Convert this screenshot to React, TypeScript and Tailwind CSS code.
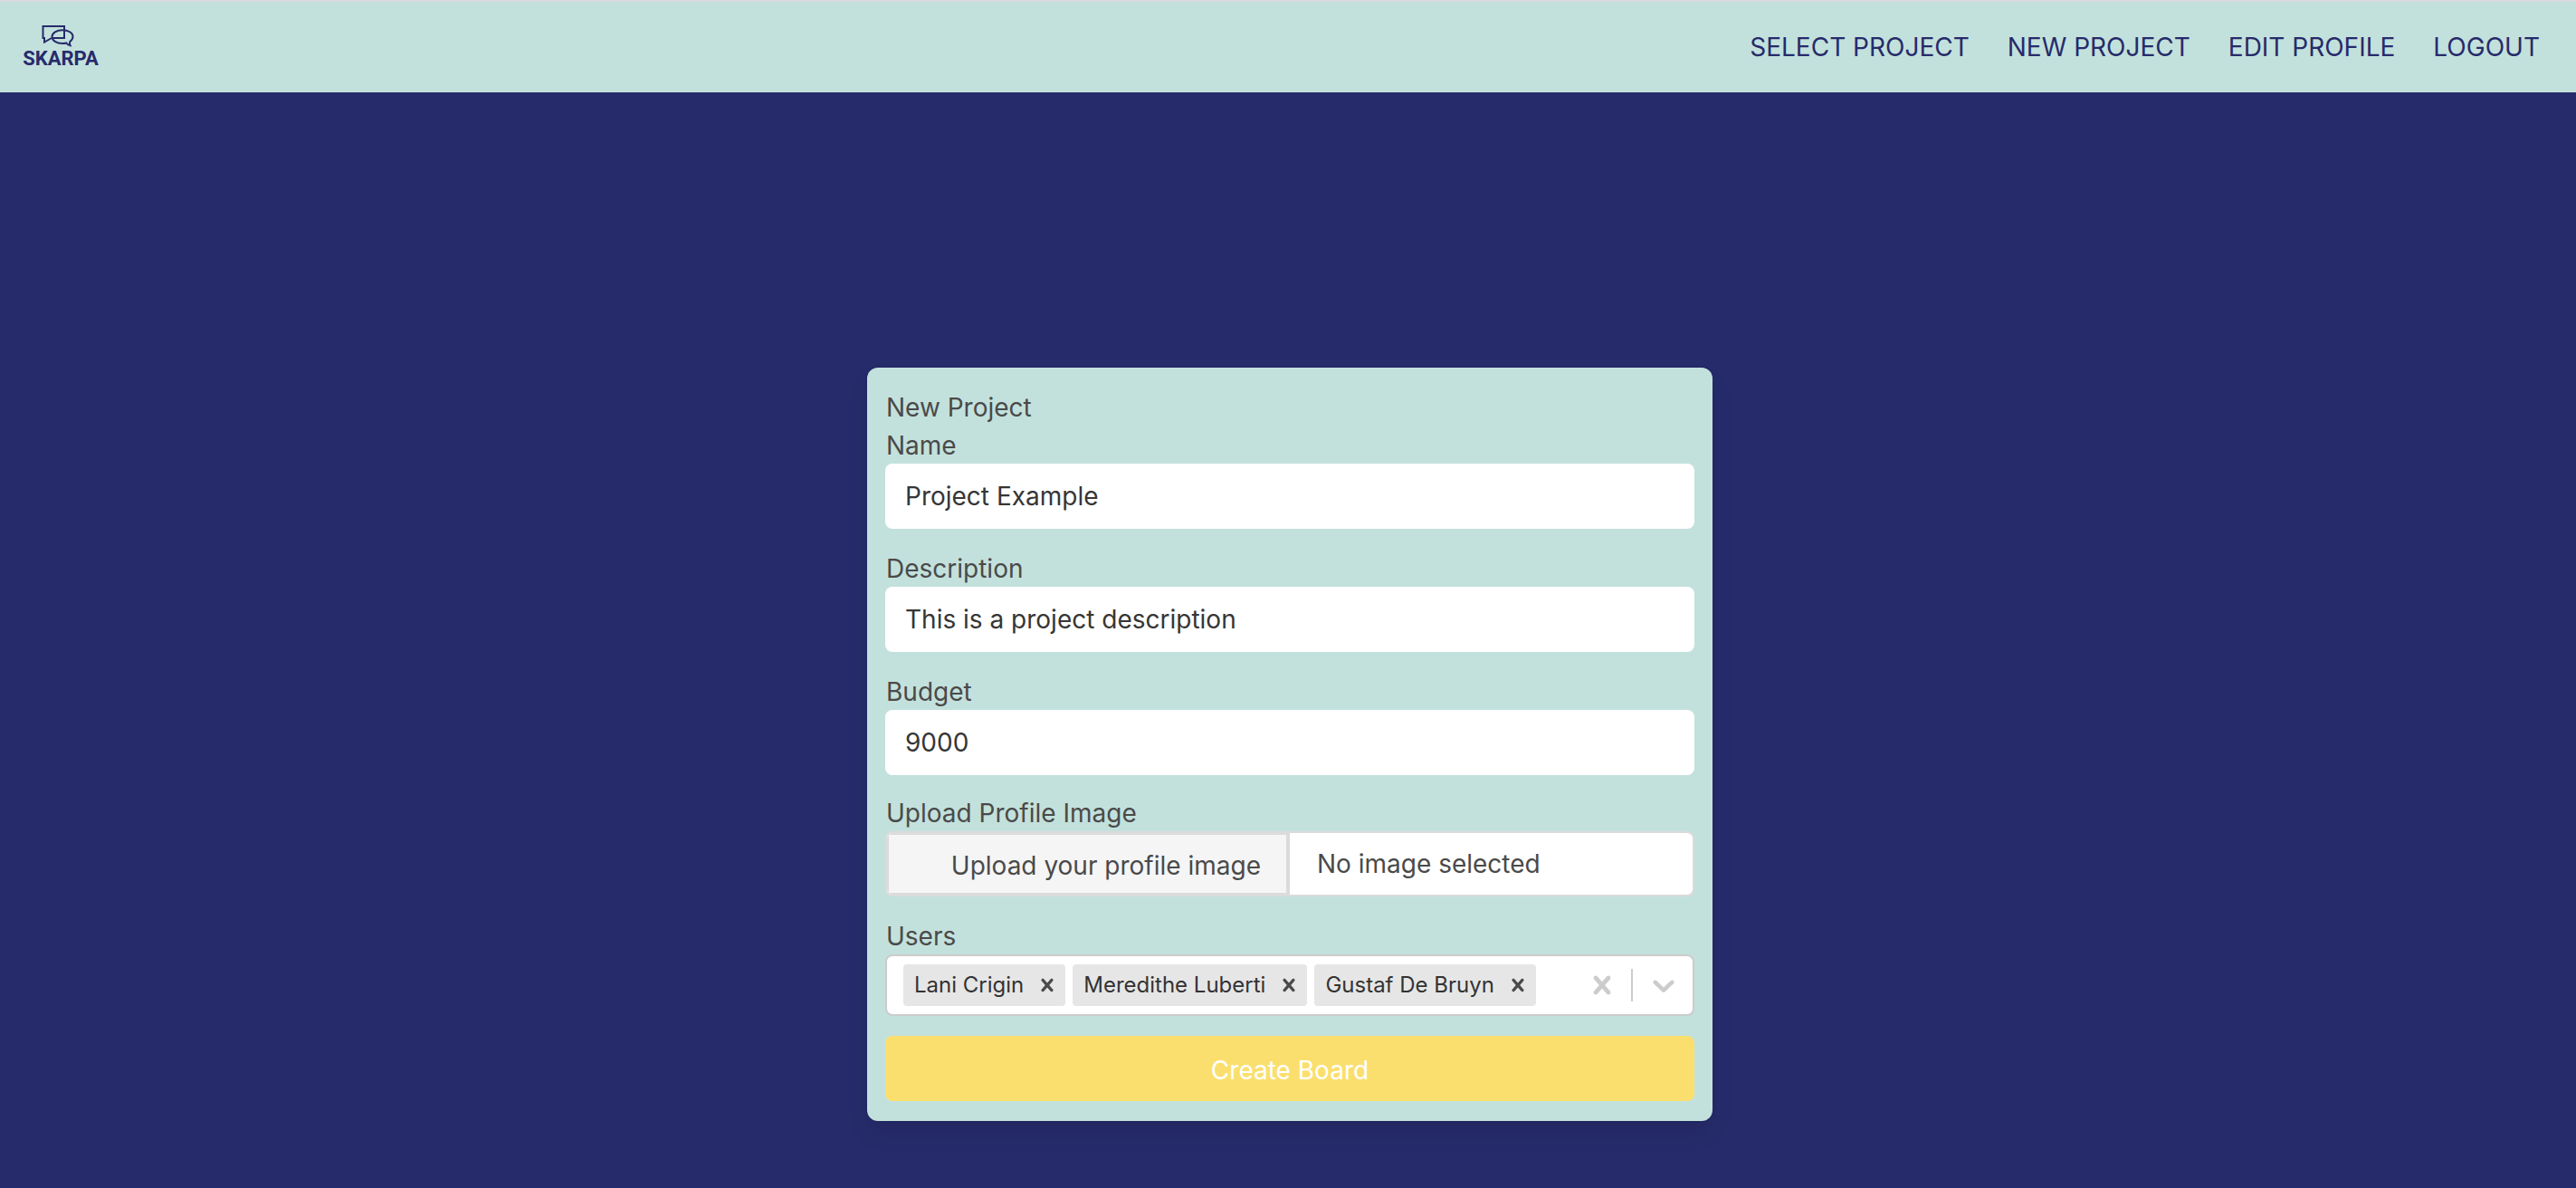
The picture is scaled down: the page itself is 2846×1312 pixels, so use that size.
import React, { useState } from "react";

const CROSS =
  "M14.348 14.849c-0.469 0.469-1.229 0.469-1.697 0l-2.651-3.030-2.651 3.029c-0.469 0.469-1.229 0.469-1.697 0-0.469-0.469-0.469-1.229 0-1.697l2.758-3.15-2.759-3.152c-0.469-0.469-0.469-1.228 0-1.697s1.228-0.469 1.697 0l2.652 3.031 2.651-3.031c0.469-0.469 1.228-0.469 1.697 0s0.469 1.229 0 1.697l-2.758 3.152 2.758 3.15c0.469 0.469 0.469 1.229 0 1.698z";
const CHEVRON =
  "M4.516 7.548c0.436-0.446 1.043-0.481 1.576 0l3.908 3.747 3.908-3.747c0.533-0.481 1.141-0.446 1.574 0 0.436 0.445 0.408 1.197 0 1.615-0.406 0.418-4.695 4.502-4.695 4.502-0.217 0.223-0.502 0.335-0.787 0.335s-0.57-0.112-0.789-0.335c0 0-4.287-4.084-4.695-4.502s-0.436-1.17 0-1.615z";

function Icon({ path, className }: { path: string; className: string }) {
  return (
    <svg viewBox="0 0 20 20" fill="currentColor" aria-hidden="true" className={className}>
      <path d={path} />
    </svg>
  );
}

function Logo() {
  return (
    <a href="#" aria-label="Skarpa" className="flex w-[94px] flex-col items-center text-[#262b6b]">
      <svg viewBox="0 -1 42 26" fill="none" stroke="currentColor" strokeWidth="2" aria-hidden="true" className="h-[26px] w-[42px]">
        <path d="M11 14H25V1H1.500V14H3V18.500L11 14" />
        <path d="M31.200 18C33.500 16.400 34.500 14.500 34.500 12.300C34.500 8.200 29.500 5.300 23 5.300C16.500 5.300 11.500 8.200 11.500 12.500C11.500 17 16.500 20 23 20C25 20 26.200 19.800 27.300 19.500C28.300 21 29.600 22 31.600 22.300C31 21.200 30.800 19.500 31.200 18Z" />
      </svg>
      <span className="font-[Roboto,sans-serif] text-[22px] leading-6 font-bold">SKARPA</span>
    </a>
  );
}

const LINKS = ["SELECT PROJECT", "NEW PROJECT", "EDIT PROFILE", "LOGOUT"];

function Field({ id, label, initial }: { id: string; label: string; initial: string }) {
  return (
    <div className="flex flex-col">
      <label htmlFor={id} className="pt-0.5 pl-px leading-10">
        {label}
      </label>
      <input
        id={id}
        type="text"
        defaultValue={initial}
        className="h-[72px] w-full rounded-lg bg-white px-[22px] text-[#363636] outline-none"
      />
    </div>
  );
}

export default function App() {
  const [users, setUsers] = useState(["Lani Crigin", "Meredithe Luberti", "Gustaf De Bruyn"]);

  return (
    <div className="flex min-h-screen flex-col bg-[#262b6b] font-[Inter,sans-serif] text-[28px] leading-[42px] text-[#4a4a4a]">
      <header className="flex h-[102px] items-center justify-between border-t-2 border-[#d9dbdf] bg-[#c3e1dc] pr-10 pl-5">
        <Logo />
        <nav className="flex gap-[42px] text-[#262b6b]">
          {LINKS.map((link) => (
            <a key={link} href="#">
              {link}
            </a>
          ))}
        </nav>
      </header>

      <main className="flex justify-center pt-[304px] pl-1">
        <form
          onSubmit={(e) => e.preventDefault()}
          className="flex w-[934px] flex-col rounded-xl bg-[#c3e1dc] px-5 py-[22px] shadow-[0_14px_28px_-4px_rgba(10,10,10,0.1),0_0_0_2px_rgba(10,10,10,0.02)]"
        >
          <h1 className="pt-0.5 pl-px leading-10">New Project</h1>
          <div className="flex flex-col gap-[22px]">
            <Field id="name" label="Name" initial="Project Example" />
            <Field id="description" label="Description" initial="This is a project description" />
            <div className="flex flex-col gap-5">
              <Field id="budget" label="Budget" initial="9000" />
              <div className="flex flex-col">
                <label htmlFor="image" className="pt-0.5 pl-px leading-10">
                  Upload Profile Image
                </label>
                <label className="flex h-[72px] cursor-pointer overflow-hidden rounded-lg border-2 border-[#dbdbdb] bg-white">
                  <input id="image" type="file" className="sr-only" />
                  <span className="flex w-1/2 items-center justify-end border-2 border-r-4 border-[#dbdbdb] bg-[#f5f5f5] pt-1 pr-7">
                    Upload your profile image
                  </span>
                  <span className="flex w-1/2 items-center pl-[30px]">No image selected</span>
                </label>
              </div>
            </div>

            <div className="flex flex-col">
              <label htmlFor="users" className="pt-0.5 pl-px leading-10">
                Users
              </label>
              <div className="flex h-[68px] items-center rounded-lg border-2 border-[#cccccc] bg-white pl-[18px] text-2xl text-[#333333]">
                <div className="flex flex-1 items-center gap-2">
                  {users.map((user) => (
                    <span key={user} className="flex h-[46px] shrink-0 rounded-sm bg-[#e6e6e6]">
                      <span className="flex items-center pr-1 pl-3 leading-8">{user}</span>
                      <button
                        type="button"
                        aria-label={`Remove ${user}`}
                        onClick={() => setUsers(users.filter((u) => u !== user))}
                        className="flex items-center pr-1.5 pl-2 text-[#4a4a4a]"
                      >
                        <Icon path={CROSS} className="size-7" />
                      </button>
                    </span>
                  ))}
                  <input id="users" type="text" className="w-0 min-w-0 flex-1 outline-none" />
                </div>
                <button type="button" aria-label="Clear users" onClick={() => setUsers([])} className="px-3 text-[#cccccc]">
                  <Icon path={CROSS} className="size-10" />
                </button>
                <span className="h-9 w-0.5 bg-[#cccccc]" />
                <button type="button" aria-label="Show users" className="pr-3 pl-3.5 text-[#cccccc]">
                  <Icon path={CHEVRON} className="size-10" />
                </button>
              </div>
            </div>

            <button type="submit" className="h-[72px] rounded-lg bg-[#fbdf6e] pt-1 text-white">
              Create Board
            </button>
          </div>
        </form>
      </main>
    </div>
  );
}
